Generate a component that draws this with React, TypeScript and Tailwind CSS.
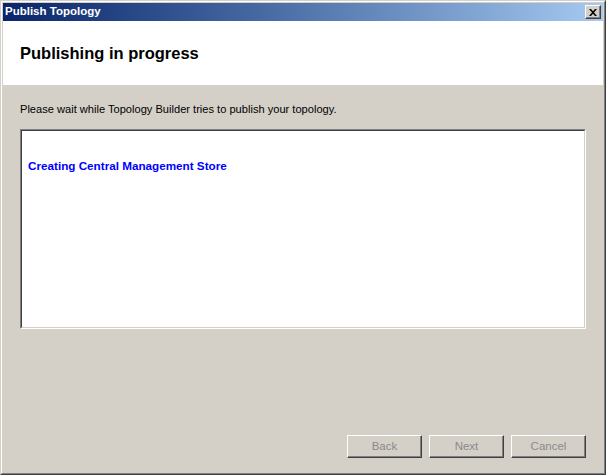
import React from "react";

function Btn({ label }: { label: string }) {
  return (
    <div className="w-[75px] h-[23px] border border-t-white border-l-white border-r-[#404040] border-b-[#404040] shadow-[inset_-1px_-1px_0_#808080] flex items-center justify-center text-[11.5px] text-[#8a8a8a]">
      {label}
    </div>
  );
}

export default function App() {
  return (
    <div
      className="w-[606px] h-[475px] border border-t-[#d4d0c8] border-l-[#d4d0c8] border-r-[#404040] border-b-[#404040]"
      style={{ fontFamily: '"Liberation Sans", Arial, sans-serif' }}
    >
      <div className="h-full border border-t-white border-l-white border-r-[#808080] border-b-[#808080] p-[1px] bg-[#d4d0c8] flex flex-col">
        {/* Title bar */}
        <div className="h-[18px] bg-gradient-to-r from-[#0a246a] to-[#a6caf0] flex items-center justify-between pl-[2px] pr-[2px]">
          <span className="text-white text-[11.5px] font-bold leading-none">Publish Topology</span>
          <div className="w-[16px] h-[14px] bg-[#d4d0c8] border border-t-white border-l-white border-r-[#404040] border-b-[#404040] shadow-[inset_-1px_-1px_0_#808080] flex items-center justify-center">
            <svg width="8" height="7" viewBox="0 0 8 7">
              <path d="M0 0h2l2 2.2L6 0h2L5 3.5 8 7H6L4 4.8 2 7H0l3-3.5z" fill="#000" />
            </svg>
          </div>
        </div>
        {/* Header */}
        <div className="h-[64px] bg-white flex items-center pl-[17px]">
          <span className="text-[16.5px] font-bold text-black">Publishing in progress</span>
        </div>
        {/* Body */}
        <div className="flex-1 flex flex-col pl-[17px]">
          <div className="pt-[18px] text-[11.1px] leading-[13px] text-black">
            Please wait while Topology Builder tries to publish your topology.
          </div>
          <div className="mt-[13px] w-[566px] h-[200px] border border-t-[#808080] border-l-[#808080] border-r-white border-b-white">
            <div className="h-full border border-t-[#404040] border-l-[#404040] border-r-[#d4d0c8] border-b-[#d4d0c8] bg-white pl-[6px] pt-[22px]">
              <span className="text-[11.7px] font-bold text-[#0000ff]">Creating Central Management Store</span>
            </div>
          </div>
          <div className="flex-1" />
          <div className="flex justify-end gap-[7px] w-[566px] mb-[14px]">
            <Btn label="Back" />
            <Btn label="Next" />
            <Btn label="Cancel" />
          </div>
        </div>
      </div>
    </div>
  );
}
